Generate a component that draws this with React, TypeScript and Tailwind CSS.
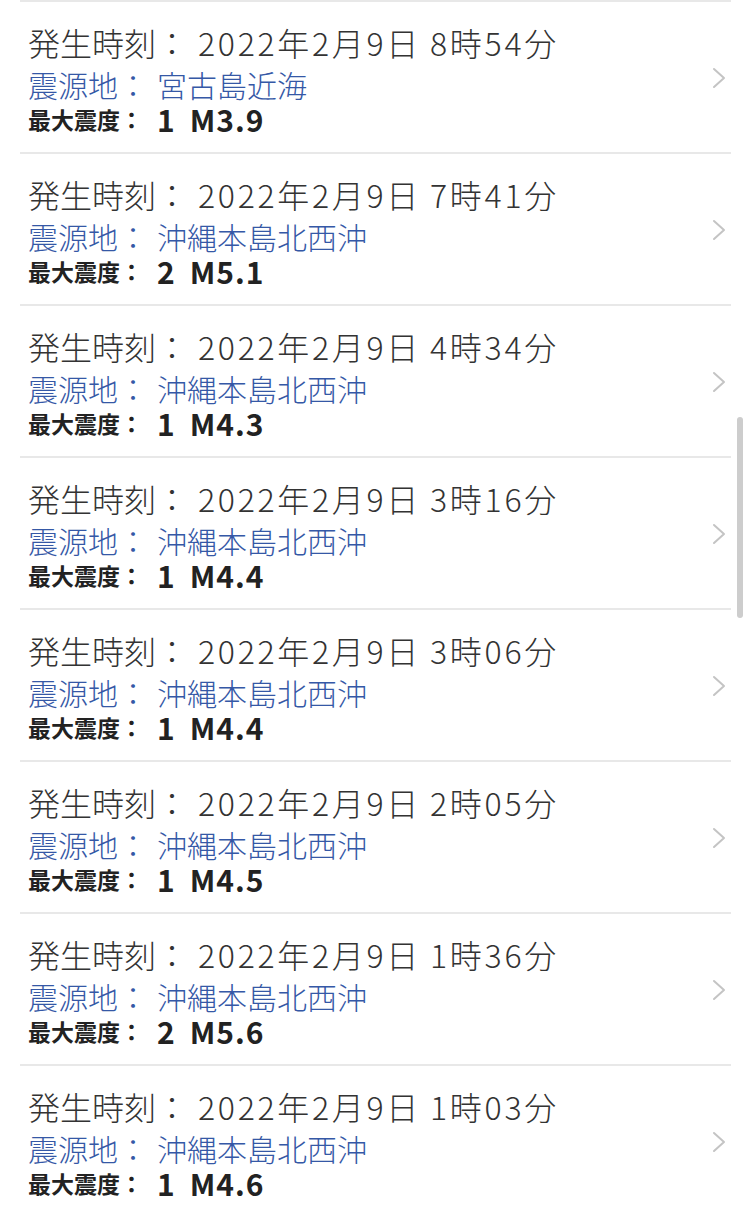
import React from "react";

type Quake = { time: string; place: string; shindo: string; mag: string };

const data: Quake[] = [
  { time: "8時54分", place: "宮古島近海", shindo: "1", mag: "M3.9" },
  { time: "7時41分", place: "沖縄本島北西沖", shindo: "2", mag: "M5.1" },
  { time: "4時34分", place: "沖縄本島北西沖", shindo: "1", mag: "M4.3" },
  { time: "3時16分", place: "沖縄本島北西沖", shindo: "1", mag: "M4.4" },
  { time: "3時06分", place: "沖縄本島北西沖", shindo: "1", mag: "M4.4" },
  { time: "2時05分", place: "沖縄本島北西沖", shindo: "1", mag: "M4.5" },
  { time: "1時36分", place: "沖縄本島北西沖", shindo: "2", mag: "M5.6" },
  { time: "1時03分", place: "沖縄本島北西沖", shindo: "1", mag: "M4.6" },
];

const font = {
  fontFamily: '"Noto Sans CJK JP", "Noto Sans", sans-serif',
};

function Row({ q }: { q: Quake }) {
  return (
    <div className="ml-[20px] w-[711px] h-[152px] border-t-2 border-[#e8e8e8] flex items-center">
      <div className="flex-1 pl-[8px] pt-[18px] pb-[17px] flex flex-col">
        <div className="h-[42px] flex items-center text-[32px] leading-none font-light text-[#333333] whitespace-pre">
          <span>発生時刻：</span>
          <span className="ml-[10px] tracking-[2.7px]">2022年2月9日</span>
          <span className="ml-[9px] tracking-[2.7px]">{q.time}</span>
        </div>
        <div className="h-[41px] flex items-center text-[30px] leading-none font-light text-[#3558a6] whitespace-pre">
          <span>震源地：</span>
          <span className="ml-[9px]">{q.place}</span>
        </div>
        <div className="h-[30px] flex items-center text-[#222222] font-bold leading-none whitespace-pre">
          <span className="text-[23px]">最大震度：</span>
          <span className="ml-[14px] text-[30px]">{q.shindo}</span>
          <span className="ml-[15px] text-[30px] tracking-[1px]">{q.mag}</span>
        </div>
      </div>
      <svg width="14" height="22" viewBox="0 0 14 22" className="mr-[5px] mt-[2px]">
        <polyline
          points="2,2 12,11 2,20"
          fill="none"
          stroke="#c4c4c4"
          strokeWidth="2"
          strokeLinecap="round"
          strokeLinejoin="round"
        />
      </svg>
    </div>
  );
}

export default function App() {
  return (
    <div className="relative w-[750px] h-[1216px] overflow-hidden bg-white" style={font}>
      {data.map((q, i) => (
        <Row key={i} q={q} />
      ))}
      <div className="absolute left-[737px] top-[417px] w-[6px] h-[201px] rounded-full bg-[#cdcdcd]" />
    </div>
  );
}
